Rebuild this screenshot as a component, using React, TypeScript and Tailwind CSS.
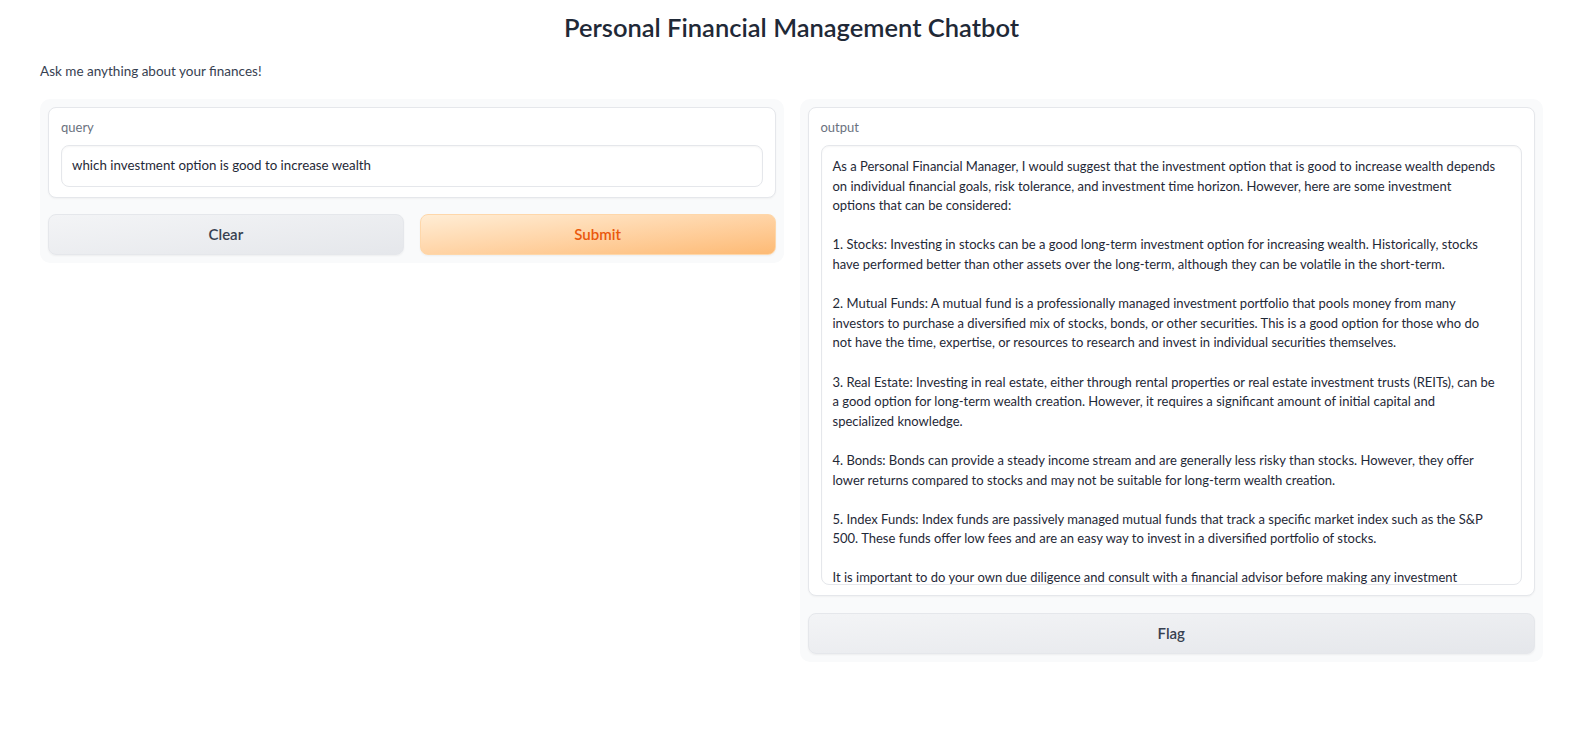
import React from "react";

const outputLines: string[] = [
  "As a Personal Financial Manager, I would suggest that the investment option that is good to increase wealth depends",
  "on individual financial goals, risk tolerance, and investment time horizon. However, here are some investment",
  "options that can be considered:",
  "",
  "1. Stocks: Investing in stocks can be a good long-term investment option for increasing wealth. Historically, stocks",
  "have performed better than other assets over the long-term, although they can be volatile in the short-term.",
  "",
  "2. Mutual Funds: A mutual fund is a professionally managed investment portfolio that pools money from many",
  "investors to purchase a diversified mix of stocks, bonds, or other securities. This is a good option for those who do",
  "not have the time, expertise, or resources to research and invest in individual securities themselves.",
  "",
  "3. Real Estate: Investing in real estate, either through rental properties or real estate investment trusts (REITs), can be",
  "a good option for long-term wealth creation. However, it requires a significant amount of initial capital and",
  "specialized knowledge.",
  "",
  "4. Bonds: Bonds can provide a steady income stream and are generally less risky than stocks. However, they offer",
  "lower returns compared to stocks and may not be suitable for long-term wealth creation.",
  "",
  "5. Index Funds: Index funds are passively managed mutual funds that track a specific market index such as the S&P",
  "500. These funds offer low fees and are an easy way to invest in a diversified portfolio of stocks.",
  "",
  "It is important to do your own due diligence and consult with a financial advisor before making any investment",
];

function Panel({ children }: { children: React.ReactNode }) {
  return <div className="flex flex-col gap-4 rounded-[10px] bg-[#f9fafb] p-2">{children}</div>;
}

function Card({ label, children }: { label: string; children: React.ReactNode }) {
  return (
    <div className="rounded-[8px] border border-[#e5e7eb] bg-white px-[12px] pt-[9px] pb-[10px] shadow-[0_1px_2px_rgba(0,0,0,0.04)]">
      <div className="mb-[8px] text-[13px] leading-[20px] text-[#6b7280]">{label}</div>
      {children}
    </div>
  );
}

function GrayButton({ label }: { label: string }) {
  return (
    <button className="h-[41px] w-full rounded-[8px] border border-[#e5e7eb] bg-gradient-to-br from-[#f3f4f6] to-[#e5e7eb] text-[15px] font-semibold text-[#374151] shadow-[0_1px_2px_rgba(0,0,0,0.05)]">
      {label}
    </button>
  );
}

export default function App() {
  return (
    <div
      className="min-h-screen bg-white pl-[40px] pr-[33px] text-[#1f2937]"
      style={{ fontFamily: "Lato, 'Noto Sans', sans-serif" }}
    >
      <h1 className="pt-[12px] text-center text-[25.5px] font-semibold leading-[30px] text-[#1f2937]">
        Personal Financial Management Chatbot
      </h1>
      <p className="mt-[19px] text-[13.5px] leading-[20px] text-[#374151]">Ask me anything about your finances!</p>

      <div className="mt-[18px] grid grid-cols-2 items-start gap-4">
        <Panel>
          <Card label="query">
            <div className="flex h-[42px] items-center rounded-[8px] border border-[#e5e7eb] bg-white px-[10px] text-[13.3px] text-[#1f2937] shadow-[inset_0_1px_2px_rgba(0,0,0,0.04)]">
              which investment option is good to increase wealth
            </div>
          </Card>
          <div className="grid grid-cols-2 gap-4">
            <GrayButton label="Clear" />
            <button className="h-[41px] w-full rounded-[8px] border border-[#fed7aa] bg-gradient-to-br from-[#ffedd5] to-[#fdba74] text-[15px] font-semibold text-[#ea580c] shadow-[0_1px_2px_rgba(0,0,0,0.05)]">
              Submit
            </button>
          </div>
        </Panel>

        <Panel>
          <Card label="output">
            <div className="h-[440px] overflow-hidden rounded-[8px] border border-[#e5e7eb] bg-white px-[11px] pt-[11px] text-[13px] leading-[19.6px] text-[#1f2937] shadow-[inset_0_1px_2px_rgba(0,0,0,0.04)]">
              {outputLines.map((line, i) => (
                <div key={i} className="h-[19.6px] whitespace-nowrap">
                  {line}
                </div>
              ))}
            </div>
          </Card>
          <div className="pt-px">
            <GrayButton label="Flag" />
          </div>
        </Panel>
      </div>
    </div>
  );
}
